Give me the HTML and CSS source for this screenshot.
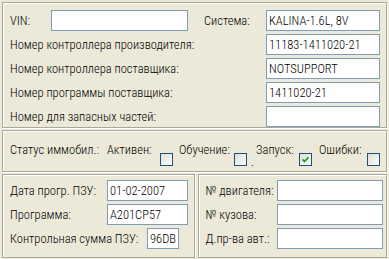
FILE: index.html
```html
<!DOCTYPE html>
<html>
<head>
  <meta charset="UTF-8" />
  <link rel="stylesheet" href="styles.css">
</head>
<body>
  <div class="window">
    <div class="panel panel-ids">
      <span class="lbl">VIN:</span>
      <input class="field" type="text" value="" readonly />
      <span class="lbl">Система:</span>
      <input class="field" type="text" value="KALINA-1.6L, 8V" readonly />

      <span class="lbl wide">Номер контроллера производителя:</span>
      <input class="field" type="text" value="11183-1411020-21" readonly />

      <span class="lbl wide">Номер контроллера поставщика:</span>
      <input class="field" type="text" value="NOTSUPPORT" readonly />

      <span class="lbl wide">Номер программы поставщика:</span>
      <input class="field" type="text" value="1411020-21" readonly />

      <span class="lbl wide">Номер для запасных частей:</span>
      <input class="field" type="text" value="" readonly />
    </div>

    <div class="panel panel-status">
      <span class="lbl">Статус иммобил.:</span>
      <span class="lbl">Активен:</span>
      <span class="check"></span>
      <span class="lbl">Обучение:</span>
      <span class="check-cell"><span class="check"></span><span class="dot">.</span></span>
      <span class="lbl">Запуск:</span>
      <span class="check checked">
        <svg width="7" height="7" viewBox="0 0 7 7"><path d="M0.5 3.5 L2.5 5.5 L6.5 1.2" fill="none" stroke="#21a121" stroke-width="1.8"/></svg>
      </span>
      <span class="lbl">Ошибки:</span>
      <span class="check"></span>
    </div>

    <div class="bottom">
      <div class="panel panel-rom">
        <div class="row">
          <span class="lbl rom-lbl">Дата прогр. ПЗУ:</span>
          <input class="field rom-field" type="text" value="01-02-2007" readonly />
        </div>
        <div class="row">
          <span class="lbl rom-lbl">Программа:</span>
          <input class="field rom-field" type="text" value="A201CP57" readonly />
        </div>
        <div class="row">
          <span class="lbl sum-lbl">Контрольная сумма ПЗУ:</span>
          <input class="field sum-field" type="text" value="96DB" readonly />
        </div>
      </div>
      <div class="panel panel-car">
        <div class="row">
          <span class="lbl car-lbl">№ двигателя:</span>
          <input class="field car-field" type="text" value="" readonly />
        </div>
        <div class="row">
          <span class="lbl car-lbl">№ кузова:</span>
          <input class="field car-field" type="text" value="" readonly />
        </div>
        <div class="row">
          <span class="lbl car-lbl">Д.пр-ва авт.:</span>
          <input class="field car-field" type="text" value="" readonly />
        </div>
      </div>
    </div>
  </div>
</body>
</html>
```

FILE: styles.css
```css
body {
  margin: 0;
  background: #ECE9D8;
  font-family: "Roboto Condensed", "Liberation Sans", sans-serif;
  font-size: 12.5px;
  font-weight: 300;
  color: #000;
}

.window {
  width: 385px;
  padding: 2px 0 0 2px;
  display: flex;
  flex-direction: column;
  gap: 2px;
}

.panel {
  box-sizing: border-box;
  border: 1px solid #ACA899;
  box-shadow: inset 1px 1px #fff, 1px 1px #fff;
}

.lbl {
  white-space: nowrap;
  line-height: 14px;
}

.field {
  box-sizing: border-box;
  height: 21px;
  margin: 0;
  padding: 0 2px;
  border: 1px solid #7F9DB9;
  background: #fff;
  font-family: "Roboto Condensed", "Liberation Sans", sans-serif;
  font-size: 12.5px;
  font-weight: 300;
  color: #000;
  outline: none;
}

/* top block */
.panel-ids {
  height: 126px;
  padding: 7px 0 0 7px;
  display: grid;
  grid-template-columns: 41px 137px 16px 62px 114px;
  grid-auto-rows: 21px;
  row-gap: 3px;
  align-items: center;
}

.panel-ids .field {
  width: 100%;
}

.panel-ids .lbl:nth-of-type(2) {
  grid-column: 4;
}

.panel-ids .field:nth-of-type(2) {
  grid-column: 5;
}

.panel-ids .wide {
  grid-column: 1 / 5;
}

/* immobilizer status */
.panel-status {
  height: 42px;
  padding: 12px 0 0 7px;
  display: grid;
  grid-template-columns: 97px 53px 19px 55px 22px 43px 20px 48px 13px;
  align-items: start;
}

.check {
  box-sizing: border-box;
  display: flex;
  align-items: center;
  justify-content: center;
  width: 13px;
  height: 13px;
  margin-top: 10px;
  border: 1px solid #1C5180;
  background: linear-gradient(135deg, #DCDCD7, #fff);
}

.check-cell {
  display: flex;
  align-items: flex-start;
}

.dot {
  margin: 12px 0 0 4px;
  line-height: 14px;
}

/* bottom blocks */
.bottom {
  display: flex;
  gap: 3px;
}

.panel-rom,
.panel-car {
  height: 84px;
  padding: 5px 0 0 7px;
  display: flex;
  flex-direction: column;
  gap: 3px;
}

.panel-rom {
  width: 193px;
}

.panel-car {
  width: 190px;
}

.row {
  display: flex;
  align-items: center;
  height: 21px;
}

.rom-lbl {
  width: 97px;
}

.rom-field {
  width: 81px;
}

.sum-lbl {
  width: 137px;
}

.sum-field {
  width: 32px;
}

.car-lbl {
  width: 71px;
}

.car-field {
  width: 106px;
}
```
